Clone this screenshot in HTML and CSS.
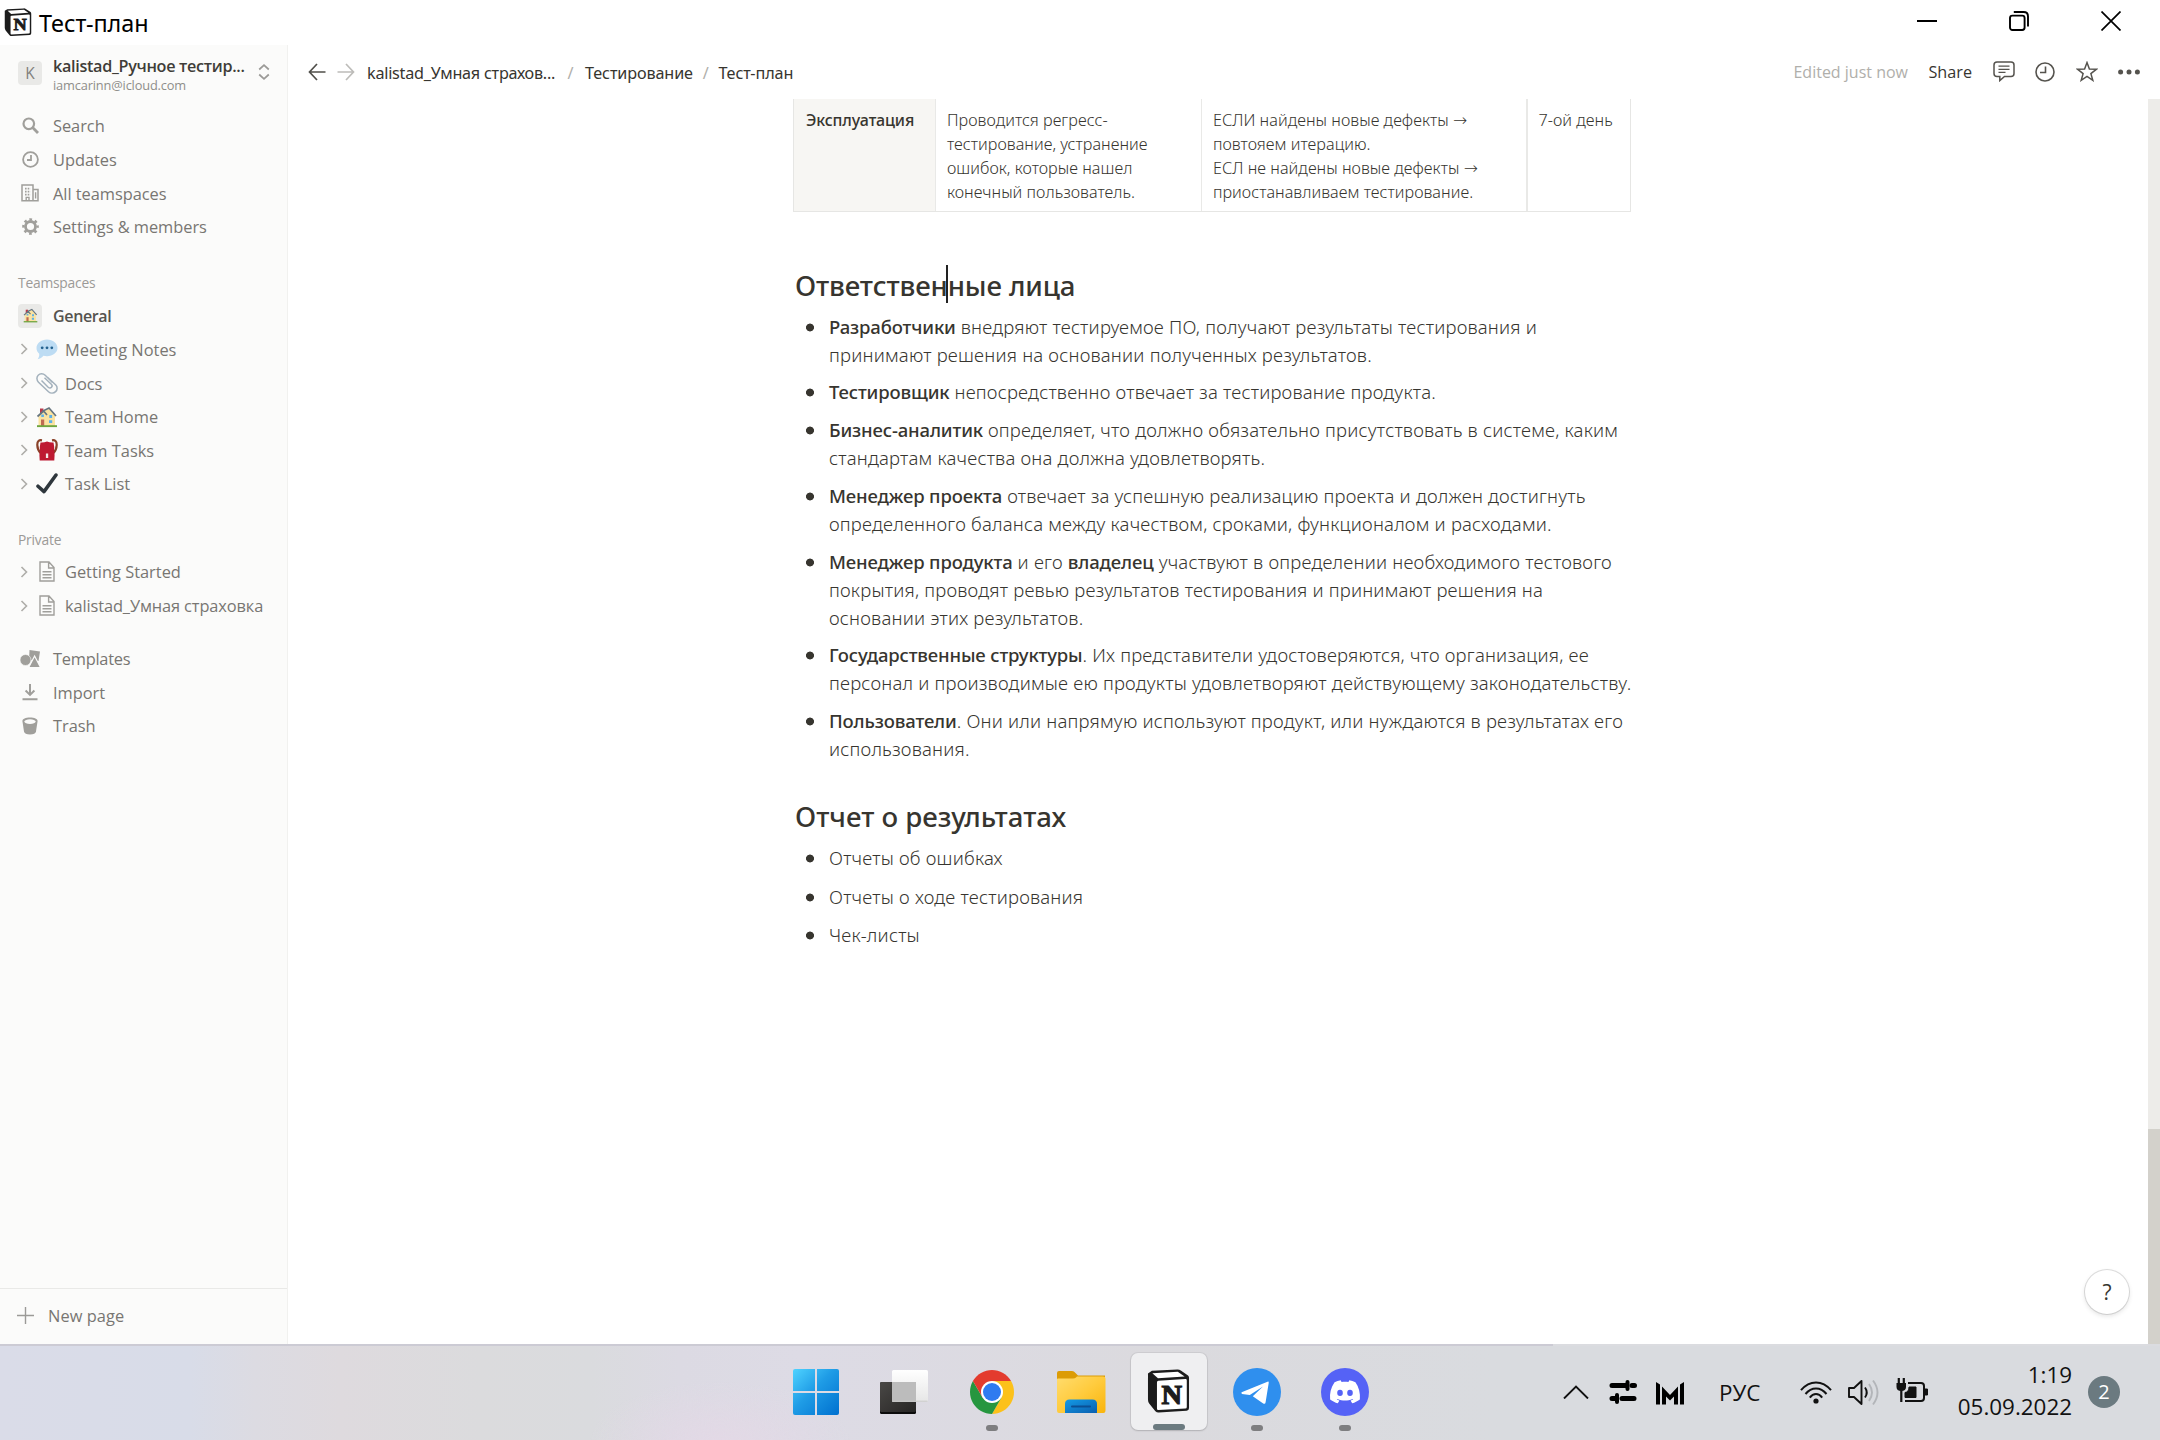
FILE: index.html
```html
<!DOCTYPE html>
<html lang="ru">
<head>
<meta charset="utf-8">
<title>Тест-план</title>
<link rel="stylesheet" href="styles.css">
</head>
<body>
<svg class="defs" width="0" height="0">
  <defs>
    <linearGradient id="win" gradientUnits="userSpaceOnUse" x1="0" y1="0" x2="46" y2="46"><stop offset="0" stop-color="#4fd3ff"/><stop offset=".45" stop-color="#1f9ce6"/><stop offset="1" stop-color="#0070cf"/></linearGradient>
    <linearGradient id="dark" x1="0" y1="0" x2="1" y2="1"><stop offset="0" stop-color="#4a4846"/><stop offset="1" stop-color="#262524"/></linearGradient>
    <linearGradient id="light" x1="0" y1="0" x2="0" y2="1"><stop offset="0" stop-color="#fff"/><stop offset="1" stop-color="#e6e6e6"/></linearGradient>
    <linearGradient id="fold" x1="0" y1="0" x2="1" y2="1"><stop offset="0" stop-color="#ffdc6e"/><stop offset=".5" stop-color="#ffcb3d"/><stop offset="1" stop-color="#f9b40c"/></linearGradient>
    <linearGradient id="tray" x1="0" y1="0" x2="1" y2="1"><stop offset="0" stop-color="#139be6"/><stop offset="1" stop-color="#0b5fb0"/></linearGradient>
  </defs>
  <symbol id="cube" viewBox="0 0 44 46" overflow="visible">
    <path d="M1 4.5 L5 1.8 L31 .6 Q33 .5 35 1.8 L42 6.5 Q43 7.3 43 9 L43 40 Q43 42.6 40.5 42.8 L12 44.6 Q10 44.7 8.6 43.2 L2.4 35.5 Q1 33.8 1 31.5Z" fill="#1c1c1c"/>
    <path d="M5.5 4.2 L31.5 2.7 L38.5 7.6 L11.2 9.4Z" fill="#fff"/>
    <path d="M10.2 13.6 Q10.2 12.2 11.6 12.1 L39.3 10.3 Q40.7 10.2 40.7 11.6 L40.7 38.8 Q40.7 40.3 39.3 40.4 L11.6 42 Q10.2 42.1 10.2 40.6Z" fill="#fff"/>
    <text x="25.4" y="35.500" text-anchor="middle" class="cube-letter" stroke="#1c1c1c" stroke-width="1.2" textLength="21" lengthAdjust="spacingAndGlyphs">N</text>
  </symbol>
  <symbol id="chev" viewBox="0 0 8 12"><path d="M1.5 1 L6.5 6 L1.5 11" fill="none" stroke="#aeada9" stroke-width="1.6"/></symbol>
  <symbol id="page" viewBox="0 0 16 21"><path d="M1 1H10L15 6.5V20H1Z M9.6 1V7H15 M3.5 10.8H12.5 M3.5 13.8H12.5 M3.5 16.8H12.5" fill="none" stroke="#a09f9b" stroke-width="1.4"/></symbol>
  <symbol id="house" viewBox="0 0 22 22">
    <path d="M4 2.5h3.4v5H4z" fill="#b93a4a"/><path d="M2.5 10 L7.5 5.5 L13 2.8 L19 9 V20H2.5Z" fill="#fbe3a1"/>
    <path d="M1.5 10.5 L7.6 5 L11 9 M6.5 5.2 L13 2 L20 10" fill="none" stroke="#66757f" stroke-width="1.7"/>
    <path d="M5.3 8.5h2.6v2.6H5.3zM13.3 9h2.8v3h-2.8zM13 14.3h3.2v2.8H13z" fill="#5bb0ea"/><path d="M5 13.5h3.2V20H5z" fill="#bf6a52"/><path d="M1 19.2h20v1.9H1z" fill="#6fa53f"/>
  </symbol>
</svg>

<header class="titlebar">
  <svg class="app-icon" width="28" height="29"><use href="#cube"/></svg>
  <span class="app-title">Тест-план</span>
  <div class="win-controls">
    <svg width="20" height="20" viewBox="0 0 20 20"><path d="M0 10H20" stroke="#000" stroke-width="2"/></svg>
    <svg width="20" height="20" viewBox="0 0 20 20" fill="none" stroke="#000" stroke-width="1.9"><rect x="1" y="4.6" width="14.6" height="14.4" rx="2.4"/><path d="M4.8 1H14.6Q19 1 19 5.4V15.4"/></svg>
    <svg width="20" height="20" viewBox="0 0 20 20"><path d="M.5 .5 L19.5 19.5 M19.5 .5 L.5 19.5" stroke="#000" stroke-width="1.7"/></svg>
  </div>
</header>

<div class="app">
  <nav class="sidebar">
    <div class="workspace">
      <span class="avatar">K</span>
      <div class="ws-text"><div class="ws-name">kalistad_Ручное тестир...</div><div class="ws-mail">iamcarinn@icloud.com</div></div>
      <svg width="12" height="16" viewBox="0 0 12 16" fill="none" stroke="#9b9a97" stroke-width="1.7"><path d="M1.2 5.5 L6 1.2 L10.8 5.5 M1.2 10.5 L6 14.8 L10.8 10.5"/></svg>
    </div>
    <div class="row"><span class="ico"><svg width="17" height="17" viewBox="0 0 17 17" fill="none" stroke="#a09f9b" stroke-width="2.2"><circle cx="6.8" cy="6.8" r="5.3"/><path d="M10.6 10.6 L16 16" stroke-width="2.8"/></svg></span>Search</div>
    <div class="row"><span class="ico"><svg width="17" height="17" viewBox="0 0 17 17" fill="none" stroke="#a09f9b" stroke-width="1.8"><circle cx="8.5" cy="8.5" r="7.4"/><path d="M9 4V9H5"/></svg></span>Updates</div>
    <div class="row"><span class="ico"><svg width="18" height="18" viewBox="0 0 18 18" fill="none" stroke="#a09f9b" stroke-width="1.5"><path d="M1 16.8V1H12V16.8Z M12 5.6H17V16.8H12"/><path d="M4 4.6H9.5 M4 7.6H9.5 M4 10.6H9.5" stroke-width="1.6" stroke-dasharray="1.6 1.1"/><path d="M5.2 17V13.4H8V17 M14.6 8.2V14.6" stroke-width="1.4"/></svg></span>All teamspaces</div>
    <div class="row"><span class="ico"><svg width="17" height="17" viewBox="0 0 17 17"><circle cx="8.5" cy="8.5" r="5" fill="none" stroke="#a09f9b" stroke-width="2.8"/><circle cx="8.5" cy="8.5" r="7.1" fill="none" stroke="#a09f9b" stroke-width="2.4" stroke-dasharray="2.7 2.876" stroke-dashoffset="1.35"/></svg></span>Settings &amp; members</div>

    <div class="label">Teamspaces</div>
    <div class="row strong"><span class="ico"><span class="tile"><svg width="15" height="15"><use href="#house"/></svg></span></span>General</div>
    <div class="row sub"><svg class="chev"><use href="#chev"/></svg><span class="emo"><svg width="22" height="21" viewBox="0 0 22 21"><path d="M11 .6C16.8 .6 21.5 4.4 21.5 9S16.8 17.2 11 17.2C9.7 17.2 8.5 17 7.4 16.7C6 18.5 4 19.8 1.6 20.3C2.9 18.6 3.4 16.8 3.2 14.8C1.5 13.3 .5 11.3 .5 9C.5 4.4 5.2 .6 11 .6Z" fill="#bddcf3"/><g fill="#24628f"><circle cx="6.2" cy="8.800" r="1.400"/><circle cx="11" cy="8.800" r="1.400"/><circle cx="15.800" cy="8.800" r="1.400"/></g></svg></span>Meeting Notes</div>
    <div class="row sub"><svg class="chev"><use href="#chev"/></svg><span class="emo"><svg width="22" height="21" viewBox="0 0 22 21" fill="none" stroke="#a3b1bc" stroke-width="1.500"><path d="M16.500 9.500 L9.200 2.300C7 .2 3.900 .5 2.200 2.200S.4 7 2.500 9.200L12.500 18.700C14.600 20.600 17.700 20.400 19.600 18.600S21.700 14 19.800 12L11.500 4.300"/><path d="M5.500 7.500 L12.200 14.200C13.300 15.200 14.700 15.100 15.500 14.300S16.300 12.300 15.300 11.300L8.500 4.800"/></svg></span>Docs</div>
    <div class="row sub"><svg class="chev"><use href="#chev"/></svg><span class="emo"><svg width="22" height="22"><use href="#house"/></svg></span>Team Home</div>
    <div class="row sub"><svg class="chev"><use href="#chev"/></svg><span class="emo"><svg width="22" height="22" viewBox="0 0 22 22"><path d="M6 1.300C3 .8 1.200 2 1.300 6C1.400 9.500 2.500 12 4.500 14 M16 1.300C19 .8 20.800 2 20.700 6C20.600 9.500 19.500 12 17.500 14" fill="none" stroke="#8a4229" stroke-width="2.200"/><path d="M4.500 3.500Q8 3.800 11 2.500Q14 3.800 17.500 3.500Q18.500 8 18.200 12Q19 16 18.300 21.500H3.700Q3 16 3.800 12Q3.500 8 4.500 3.500Z" fill="#be1931"/><path d="M9.900 14.500h2.300v4.500H9.900z" fill="#f3e7e7"/></svg></span>Team Tasks</div>
    <div class="row sub"><svg class="chev"><use href="#chev"/></svg><span class="emo"><svg width="22" height="21" viewBox="0 0 22 21"><path d="M2 13.200 L8 18.600 L20 2" fill="none" stroke="#2f373d" stroke-width="3.500" stroke-linecap="round" stroke-linejoin="round"/></svg></span>Task List</div>

    <div class="label private">Private</div>
    <div class="row sub"><svg class="chev"><use href="#chev"/></svg><span class="emo"><svg width="16" height="21"><use href="#page"/></svg></span>Getting Started</div>
    <div class="row sub cyr"><svg class="chev"><use href="#chev"/></svg><span class="emo"><svg width="16" height="21"><use href="#page"/></svg></span>kalistad_Умная страховка</div>

    <div class="row tools"><span class="ico"><svg width="20" height="17" viewBox="0 0 20 17"><path d="M9.500 0 L20 1.500 L18.500 11 L9 10Z" fill="#a09f9b"/><circle cx="5.500" cy="10" r="5.500" fill="#a09f9b" stroke="#fbfbfa" stroke-width=".6"/><path d="M14.600 6 L20.600 17.600H8.600Z" fill="#a09f9b" stroke="#fbfbfa" stroke-width="1.200"/></svg></span>Templates</div>
    <div class="row"><span class="ico"><svg width="16" height="17" viewBox="0 0 16 17" fill="none" stroke="#a09f9b" stroke-width="2"><path d="M8 0V10.500 M3.600 6.500 L8 10.900 L12.400 6.500 M.5 15.300H15.500"/></svg></span>Import</div>
    <div class="row"><span class="ico"><svg width="16" height="18" viewBox="0 0 16 18"><path d="M.4 4C.4 1.900 3.600 .6 8 .6S15.600 1.900 15.600 4L14 14.500C13.700 16.400 11.500 17.500 8 17.500S2.300 16.400 2 14.500Z" fill="#a09f9b"/><ellipse cx="8" cy="4.600" rx="5.600" ry="2.300" fill="#fbfbfa"/></svg></span>Trash</div>

    <div class="new-page"><svg width="17" height="17" viewBox="0 0 17 17" stroke="#9b9a97" stroke-width="1.400"><path d="M8.500 0V17 M0 8.500H17"/></svg>New page</div>
  </nav>

  <main class="main">
    <div class="topbar">
      <svg class="back" width="18" height="18" viewBox="0 0 18 18" fill="none" stroke="#504f4a" stroke-width="1.700"><path d="M9 1 L1.500 9 L9 17 M1.500 9H17.500"/></svg>
      <svg class="fwd" width="18" height="18" viewBox="0 0 18 18" fill="none" stroke="#bdbcb9" stroke-width="1.700"><path d="M9 1 L16.500 9 L9 17 M16.500 9H.5"/></svg>
      <span class="crumb first">kalistad_Умная страхов...</span><span class="slash s1">/</span><span class="crumb">Тестирование</span><span class="slash">/</span><span class="crumb">Тест-план</span>
      <div class="actions">
        <span class="edited">Edited just now</span>
        <span class="share">Share</span>
        <svg width="22" height="21" viewBox="0 0 22 21" fill="none" stroke="#55534e" stroke-width="1.500"><path d="M4 1H18Q21 1 21 4V12.500Q21 15.500 18 15.500H11.500L6.800 19.600V15.500H4Q1 15.500 1 12.500V4Q1 1 4 1Z"/><path d="M5.500 5.200H16.500 M5.500 8.300H16.500 M5.500 11.400H12.500" stroke-width="1.300"/></svg>
        <svg width="20" height="20" viewBox="0 0 20 20" fill="none" stroke="#55534e" stroke-width="1.600"><circle cx="10" cy="10" r="9"/><path d="M10.500 4.500V10.500H5"/></svg>
        <svg width="22" height="21" viewBox="0 0 22 21" fill="none" stroke="#55534e" stroke-width="1.500"><path d="M11 1.600 L13.400 8 L20.300 8.300 L14.900 12.600 L16.800 19.300 L11 15.400 L5.200 19.300 L7.100 12.600 L1.700 8.300 L8.600 8Z"/></svg>
        <svg width="22" height="6" viewBox="0 0 22 6" fill="#55534e"><circle cx="2.600" cy="3" r="2.500"/><circle cx="11" cy="3" r="2.500"/><circle cx="19.400" cy="3" r="2.500"/></svg>
      </div>
    </div>
    <div class="scroller">
      <article class="doc">
        <div class="table">
          <div class="cell head">Эксплуатация</div>
          <div class="cell">Проводится регресс-<br>тестирование, устранение<br>ошибок, которые нашел<br>конечный пользователь.</div>
          <div class="cell wide">ЕСЛИ найдены новые дефекты <span class="arrow">→</span><br>повтояем итерацию.<br>ЕСЛ не найдены новые дефекты <span class="arrow">→</span><br>приостанавливаем тестирование.</div>
          <div class="cell last">7-ой день</div>
        </div>
        <h2>Ответствен<span class="caret"></span>ные лица</h2>
        <ul>
          <li><b>Разработчики</b> внедряют тестируемое ПО, получают результаты тестирования и<br>принимают решения на основании полученных результатов.</li>
          <li><b>Тестировщик</b> непосредственно отвечает за тестирование продукта.</li>
          <li><b>Бизнес-аналитик</b> определяет, что должно обязательно присутствовать в системе, каким<br>стандартам качества она должна удовлетворять.</li>
          <li><b>Менеджер проекта</b> отвечает за успешную реализацию проекта и должен достигнуть<br>определенного баланса между качеством, сроками, функционалом и расходами.</li>
          <li><b>Менеджер продукта</b> и его <b>владелец</b> участвуют в определении необходимого тестового<br>покрытия, проводят ревью результатов тестирования и принимают решения на<br>основании этих результатов.</li>
          <li><b>Государственные структуры</b>. Их представители удостоверяются, что организация, ее<br>персонал и производимые ею продукты удовлетворяют действующему законодательству.</li>
          <li><b>Пользователи</b>. Они или напрямую используют продукт, или нуждаются в результатах его<br>использования.</li>
        </ul>
        <h2 class="second">Отчет о результатах</h2>
        <ul class="loose">
          <li>Отчеты об ошибках</li>
          <li>Отчеты о ходе тестирования</li>
          <li>Чек-листы</li>
        </ul>
      </article>
      <div class="track"><div class="thumb"></div></div>
      <div class="help">?</div>
    </div>
  </main>
</div>

<footer class="taskbar">
  <div class="apps">
    <div class="app-btn"><svg width="46" height="46" viewBox="0 0 46 46" fill="url(#win)"><path d="M2 0H22V22H0V2Q0 0 2 0Z"/><path d="M24 0H44Q46 0 46 2V22H24Z"/><path d="M0 24H22V46H2Q0 46 0 44Z"/><path d="M24 24H46V44Q46 46 44 46H24Z"/></svg></div>
    <div class="app-btn"><svg width="48" height="44" viewBox="0 0 48 44"><rect y="12" width="36" height="32" rx="1.500" fill="#0c0c0c"/><rect y="12" width="36" height="30" rx="1.500" fill="url(#dark)"/><rect x="12" width="36" height="32" rx="1.500" fill="url(#light)"/><path d="M12 12H36V32H13.500Q12 32 12 30.500Z" fill="#bcbcbc"/><path d="M12.500 31.200H47.500" stroke="#c9c9c9"/></svg></div>
    <div class="app-btn"><svg width="46" height="46" viewBox="0 0 46 46"><path d="M23 23 L3.950 12 A22 22 0 0 1 42.050 12Z" fill="#e33b2e"/><path d="M23 12H42.050A22 22 0 0 1 23 45L32.500 28.500Z" fill="#fcc11a"/><path d="M3.950 12A22 22 0 0 0 23 45L32.500 28.500L13.500 28.500Z" fill="#26963f"/><path d="M3.950 12 L13.500 28.500 L23 23 L23 12Z" fill="#e33b2e"/><circle cx="23" cy="23" r="11" fill="#fff"/><circle cx="23" cy="23" r="9" fill="#2f7bf0"/></svg><i></i></div>
    <div class="app-btn"><svg width="50" height="44" viewBox="0 0 50 44"><path d="M1 3Q1 1 3 1H16Q18 1 19.500 3L22 5.500H49V12H1Z" fill="#dc9c06"/><path d="M1 9.500Q1 8.600 2 8.600H17Q19 8.600 20 7.500L21 6.500H47Q49.500 6.500 49.500 8.500V40Q49.500 43 47.500 43H3Q1 43 1 41Z" fill="url(#fold)"/><path d="M9 43V34Q9 29.500 13.500 29.500H36.500Q41 29.500 41 34V43Z" fill="url(#tray)"/><path d="M16 36.500H34" stroke="#0b4f94" stroke-width="2" stroke-linecap="round"/></svg></div>
    <div class="app-btn active"><svg width="43" height="45"><use href="#cube"/></svg><i></i></div>
    <div class="app-btn"><svg width="48" height="48" viewBox="0 0 48 48"><circle cx="24" cy="24" r="24" fill="#2f8fee"/><path d="M8.600 24.300 L34.500 13.700Q36 13.200 35.700 14.900L32.600 34.300Q32.200 36.600 30.200 35.400L19.800 28.300L30 18.600L16.800 26.900L9 26Q8 25 8.600 24.300Z" fill="#fff"/></svg><i></i></div>
    <div class="app-btn"><svg width="48" height="48" viewBox="0 0 48 48"><circle cx="24" cy="24" r="24" fill="#5562f6"/><g transform="translate(9 8.800) scale(1.250)"><path fill="#fff" d="M20.317 4.370a19.791 19.791 0 00-4.885-1.515.074.074 0 00-.079.037c-.211.375-.445.865-.608 1.250-1.845-.276-3.680-.276-5.487 0-.164-.393-.406-.874-.618-1.250a.077.077 0 00-.079-.037 19.736 19.736 0 00-4.885 1.515.07.07 0 00-.032.028C.533 9.046-.319 13.580.099 18.058a.082.082 0 00.031.056c2.053 1.508 4.041 2.423 5.993 3.029a.078.078 0 00.084-.028c.462-.630.873-1.295 1.226-1.994a.076.076 0 00-.042-.106c-.653-.248-1.274-.550-1.872-.892a.077.077 0 01-.008-.128c.126-.094.252-.192.372-.291a.074.074 0 01.078-.011c3.928 1.793 8.180 1.793 12.061 0a.074.074 0 01.079.010c.120.099.246.198.373.292a.077.077 0 01-.007.128 12.299 12.299 0 01-1.873.891.077.077 0 00-.041.107c.360.698.772 1.363 1.225 1.993a.076.076 0 00.084.029c1.961-.607 3.950-1.522 6.002-3.029a.077.077 0 00.031-.055c.500-5.177-.838-9.674-3.549-13.660a.061.061 0 00-.031-.029z"/><ellipse cx="8.020" cy="12.900" rx="2.250" ry="2.450" fill="#5562f6"/><ellipse cx="15.990" cy="12.900" rx="2.250" ry="2.450" fill="#5562f6"/></g></svg><i></i></div>
  </div>
  <div class="tray">
    <svg class="t-chev" width="26" height="14" viewBox="0 0 26 14" fill="none" stroke="#111" stroke-width="1.900"><path d="M1 13.500 L13 1.500 L25 13.500"/></svg>
    <svg class="t-slide" width="28" height="26" viewBox="0 0 28 26" stroke="#000" stroke-linecap="round"><path d="M3 6.500H15 M23 6.500H25.500 M3 19.500H4 M13 19.500H25" stroke-width="5"/><path d="M18.500 3V10 M8 16V23" stroke-width="4"/><path d="M14 6.500H20 M4 19.500H9" stroke-width="5" stroke-linecap="butt"/></svg>
    <svg class="t-m" width="28" height="23" viewBox="0 0 28 23"><path d="M0 0 L4 2.500V22.500H0Z M28 0 L24 2.500V22.500H28Z M6 4.500 L14 13 L22 4.500V22.500H18V14.500L14 18.500L10 14.500V22.500H6Z" fill="#000"/></svg>
    <span class="lang">РУС</span>
    <svg class="t-wifi" width="32" height="23" viewBox="0 0 32 23" fill="none" stroke="#111" stroke-width="2"><path d="M1 9.200Q7.500 1.500 16 1.500T31 9.200 M5.500 13Q10 7.400 16 7.400T26.500 13 M9.800 16.600Q12.500 13.100 16 13.100T22.200 16.600"/><circle cx="16" cy="20" r="2.600" fill="#111" stroke="none"/></svg>
    <svg class="t-vol" width="32" height="27" viewBox="0 0 32 27" fill="none" stroke="#111" stroke-width="1.900" stroke-linejoin="round"><path d="M1 9H6L13.500 2V25L6 18H1Z"/><path d="M17 8.500Q20.500 13.500 17 18.500"/><path d="M21 5Q27 13.500 21 22 M25 1.500Q34 13.500 25 25.500" stroke="#b3b5b9"/></svg>
    <svg class="t-bat" width="32" height="25" viewBox="0 0 32 25" fill="none" stroke="#111" stroke-width="2"><path d="M12 5H25Q28 5 28 8V20Q28 23 25 23H9"/><path d="M28.500 11H31.500V17H28.500" fill="#111" stroke-width="1"/><path d="M13 9H20V19.500H9V14.500Q13 14 13 9Z" fill="#111" stroke-width="1"/><path d="M.5 5H10V9Q10 13 5.300 13Q.5 13 .5 9Z" fill="#111" stroke="none"/><path d="M2.800 0V6 M7.800 0V6 M5.300 12V24" stroke-width="2.200"/></svg>
    <div class="clock"><div>1:19</div><div>05.09.2022</div></div>
    <span class="count">2</span>
  </div>
</footer>
</body>
</html>
```
FILE: styles.css
```css
* { box-sizing: border-box; }
html, body { margin: 0; height: 100%; }
body { display: flex; flex-direction: column; width: 2160px; height: 1440px; overflow: hidden; background: #fff; color: #37352f; font-family: "Open Sans", "Noto Sans", sans-serif; }
svg { flex: none; display: block; }
.defs { position: absolute; }
.cube-letter { font: bold 27px "Liberation Serif", serif; fill: #1c1c1c; }

.titlebar { flex: none; height: 45px; display: flex; align-items: flex-start; padding-left: 4px; }
.app-icon { margin-top: 8px; overflow: visible; }
.app-title { margin: 7px 0 0 7px; font: 23.400px/32px "Noto Sans", sans-serif; letter-spacing: 0; color: #000; }
.win-controls { margin: 11px 39px 0 auto; display: flex; gap: 72px; }

.app { flex: none; height: 1299px; display: flex; }
.sidebar { width: 288px; flex: none; background: #fbfbfa; border-right: 1px solid #f1f1ef; display: flex; flex-direction: column; font-size: 16.400px; font-weight: 500; color: #787672; white-space: nowrap; }
.workspace { height: 64.200px; flex: none; display: flex; align-items: flex-start; padding-left: 18px; }
.workspace svg { margin: 19px 0 0 12px; }
.avatar { width: 24px; height: 24px; margin: 16px 11px 0 0; border-radius: 4px; background: #e9e9e7; color: #82807c; font-size: 15.500px; line-height: 24px; text-align: center; }
.ws-text { width: 193px; padding-top: 10px; }
.ws-name { font-size: 16.200px; line-height: 22px; font-weight: 600; letter-spacing: -.31px; color: #3f3d38; }
.ws-mail { font-size: 12.800px; line-height: 16px; font-weight: 400; letter-spacing: -.15px; color: #8f8e8a; }
.row { height: 33.600px; flex: none; display: flex; align-items: center; padding-left: 18px; letter-spacing: -.04px; }
.row.strong { font-weight: 600; font-size: 16px; letter-spacing: -.35px; color: #55534e; }
.ico { width: 24px; margin-right: 11px; display: flex; justify-content: center; }
.tile { width: 24px; height: 24px; border-radius: 4px; background: #e9e9e7; display: flex; align-items: center; justify-content: center; }
.row.sub { padding-left: 20px; letter-spacing: 0; }
.row.cyr { letter-spacing: -.12px; }
.row.tools { letter-spacing: -.25px; }
.chev { width: 8px; height: 12px; margin-right: 7px; }
.emo { width: 24px; margin-right: 6px; display: flex; justify-content: center; }
.label { height: 32px; margin-top: 23.500px; flex: none; display: flex; align-items: center; padding-left: 18px; padding-bottom: 1px; font-size: 13.800px; letter-spacing: -.2px; color: #9b9a97; }
.label.private { height: 31px; }
.tools { margin-top: 19.700px; }
.new-page { margin-top: auto; height: 56px; flex: none; border-top: 1px solid #e9e9e7; display: flex; align-items: center; gap: 14px; padding-left: 17px; padding-bottom: 2px; letter-spacing: .05px; }

.main { flex: 1; display: flex; flex-direction: column; }
.topbar { height: 54px; flex: none; display: flex; align-items: center; padding: 0 20px 0 20px; font-size: 16.200px; }
.back { margin: 0 11px 0 0; }
.crumb, .slash { font-family: "Noto Sans", sans-serif; white-space: nowrap; letter-spacing: -.12px; padding-top: 2px; }
.fwd { margin-right: 12px; }
.crumb.first { letter-spacing: -.25px; width: 189px; }
.slash { width: 25.500px; text-align: center; color: #b0afab; }
.slash.s1 { width: 29px; }
.actions { margin-left: auto; display: flex; align-items: center; gap: 20.500px; margin-top: -1px; }
.edited { font-size: 16px; color: #b0afab; }
.share { font-size: 16.200px; }

.scroller { position: relative; flex: 1; display: flex; }
.doc { width: 838px; margin-left: 505px; }
.table { display: grid; grid-template-columns: 142px 266px 325.500px 104.500px; border: solid #e6e6e4; border-width: 0 1px 1px; height: 113px; font: 350 16.200px/24px "Noto Sans", sans-serif; letter-spacing: .03px; white-space: nowrap; }
.cell { padding: 9px 0 0 11px; border-right: 1px solid #e9e9e7; }
.cell.head { background: #f7f6f3; font-weight: 550; font-size: 16px; letter-spacing: -.15px; padding-left: 12px; }
.cell.wide { border-right-width: 2px; }
.cell.last { border: 0; }
.arrow { font: 200 17px/20px "DejaVu Sans", sans-serif; }
h2 { margin: 54.500px 0 9.300px; padding-left: 2px; font: 550 27.600px/36px "Noto Sans", sans-serif; letter-spacing: -.11px; white-space: nowrap; }
h2.second { margin: 35.300px 0 9.800px; letter-spacing: 0; }
.caret { position: relative; top: -11px; left: -1px; display: inline-block; width: 2px; height: 38px; margin: -20px -1px -10px; vertical-align: -8px; background: #222; }
ul { margin: 0; padding: 0; list-style: none; display: flex; flex-direction: column; gap: 9.700px; font: 350 18.500px/28px "Noto Sans", sans-serif; letter-spacing: .2px; white-space: nowrap; }
ul.loose { gap: 10.500px; }
li { padding-left: 36px; background: radial-gradient(circle at 17px 14.500px, #37352f 3.600px, transparent 4.300px); }
li b { font-weight: 550; letter-spacing: -.14px; }
.track { margin-left: auto; width: 12px; background: #edece9; display: flex; align-items: flex-end; }
.thumb { width: 12px; height: 215px; background: #d3d1cb; }
.help { position: absolute; right: 31px; bottom: 30px; width: 44px; height: 44px; border-radius: 50%; background: #fff; box-shadow: 0 0 0 1px rgba(15,15,15,.13), 0 2px 5px rgba(15,15,15,.12); font-size: 21px; line-height: 44px; text-align: center; }

.taskbar { flex: none; height: 96px; display: flex; border-top: 2px solid #cccbd4;
  border-image: linear-gradient(90deg, #cccbd4 0 1552px, #dbdce0 1552px) 2;
  background: radial-gradient(ellipse 130px 60px at 720px 96px, #e3d9e6, transparent), linear-gradient(90deg, #dadce8 0, #d8dce8 190px, #dcdbe2 255px, #dedade 340px, #dbdbdd 480px, #dadbde 590px, #dcdae3 680px, #dddbe5 800px, #dbdade 1150px, #d9dbdf 1500px, #d9dbdf 100%); color: #111; }
.apps { display: flex; margin-left: 778px; gap: 12.200px; padding-top: 7px; }
.app-btn { width: 76px; height: 78px; position: relative; display: flex; align-items: center; justify-content: center; border-radius: 7px; }
.app-btn.active { background: #efeff1; box-shadow: 0 0 0 1px rgba(0,0,0,.06), 0 1px 2px rgba(0,0,0,.14); height: 77px; }
.app-btn i { position: absolute; bottom: 0; left: 32px; width: 12px; height: 6px; border-radius: 3px; background: #7e7e80; }
.app-btn.active i { left: 22px; width: 32px; background: #6b7a80; }
.tray { margin-left: auto; margin-right: 40px; display: flex; align-items: center; height: 91px; padding-top: 1px; font-size: 22.400px; }
.t-slide { margin-left: 20px; }
.t-m { margin: 2px 0 0 19px; }
.lang { margin: 1px 0 0 35px; width: 45px; }
.t-wifi { margin-left: 36px; margin-right: 16px; }
.t-bat { margin-left: 16px; margin-top: -3px; }
.clock { width: 144px; text-align: right; line-height: 32px; margin-top: -3px; }
.count { margin-left: 16px; width: 32px; height: 32px; border-radius: 50%; background: #6b7a80; color: #fff; font-size: 20px; line-height: 31px; text-align: center; }
```
